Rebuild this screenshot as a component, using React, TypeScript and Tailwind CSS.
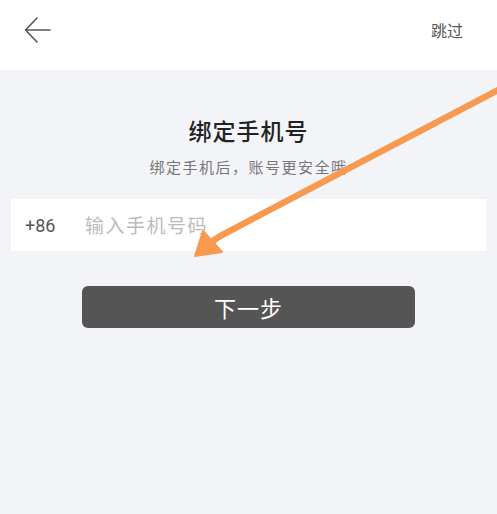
import React from "react";

const cjk = { fontFamily: '"Noto Sans CJK SC", "Noto Sans", sans-serif' };

export default function App() {
  return (
    <div className="relative h-[514px] w-[497px] overflow-hidden bg-[#f3f4f8]" style={cjk}>
      <header className="flex h-[70px] items-start justify-between bg-white pl-[24px] pr-[34px] pt-[16px]">
        <svg width="28" height="28" viewBox="0 0 28 28" fill="none" stroke="#555" strokeWidth="1.6" strokeLinecap="round" strokeLinejoin="round">
          <path d="M26 14H2" />
          <path d="M13 2 1.5 14 13 26" />
        </svg>
        <span className="mt-[2px] text-[16px] leading-[24px] text-[#555]">跳过</span>
      </header>

      <div className="flex flex-col items-center pt-[44px]">
        <h1 className="text-[23px] font-medium leading-[32px] text-[#222] tracking-[1px]">绑定手机号</h1>
        <p className="mt-[10px] text-[15px] leading-[22px] text-[#777] tracking-[1.5px]">绑定手机后，账号更安全哦</p>
      </div>

      <div className="mx-[11px] mt-[21px] flex h-[52px] items-center bg-white px-[14px]">
        <span className="w-[60px] text-[18px] text-[#555]" style={{ fontFamily: '"Roboto", sans-serif' }}>+86</span>
        <span className="text-[19px] text-[#bbb] tracking-[1.5px]">输入手机号码</span>
      </div>

      <div className="mt-[35px] flex justify-center">
        <button type="button" className="flex h-[42px] w-[333px] items-center justify-center rounded-[6px] bg-[#555] text-[22px] text-white tracking-[1px]">
          下一步
        </button>
      </div>

      {/* annotation arrow */}
      <svg className="pointer-events-none absolute left-0 top-0" width="497" height="514" viewBox="0 0 497 514">
        <path d="M502 88 L222 235 Q212 241 207 246" stroke="#f79a50" strokeWidth="6.5" strokeLinecap="round" fill="none" />
        <path d="M195 256 L203 231 L222 252 Z" fill="#f79a50" stroke="#f79a50" strokeWidth="2" strokeLinejoin="round" />
      </svg>
    </div>
  );
}
